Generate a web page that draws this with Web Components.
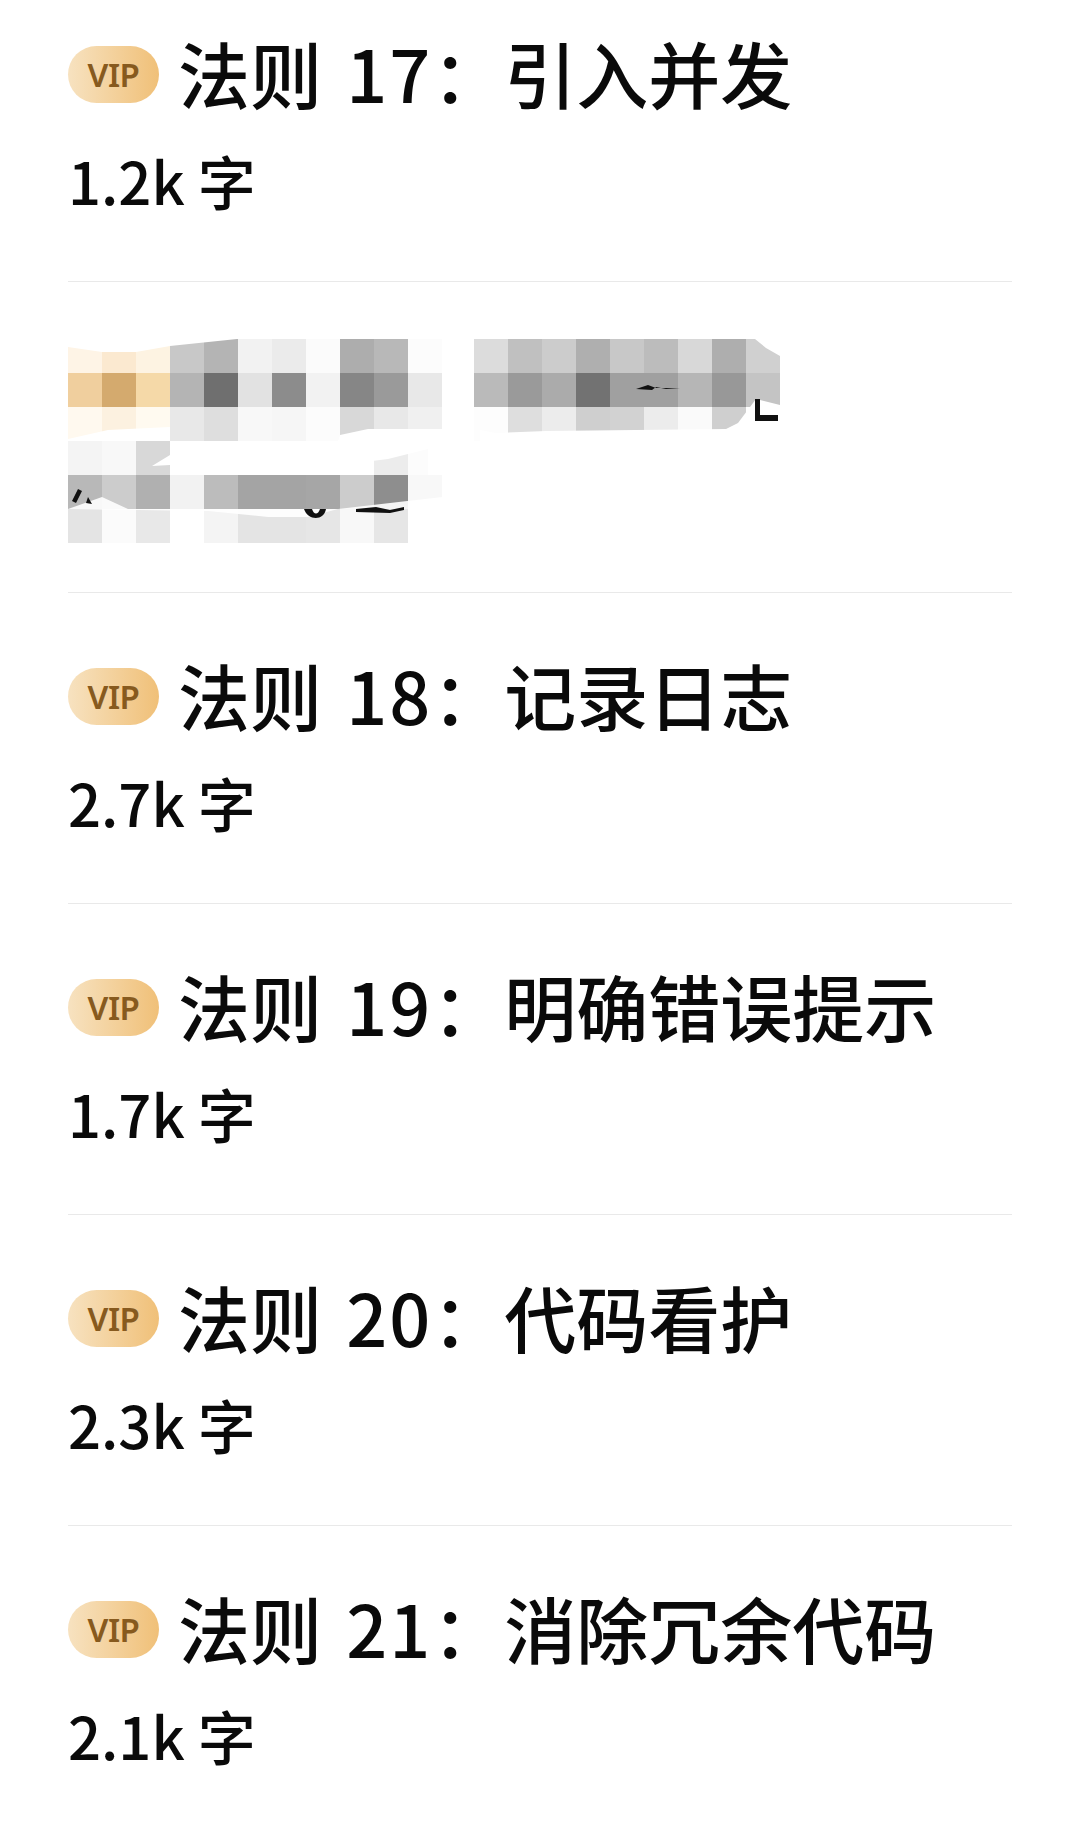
<!DOCTYPE html>
<html lang="zh"><head><meta charset="utf-8"><style>
html,body{margin:0;background:#fff}
body{font-family:"Noto Sans CJK SC","Noto Sans",sans-serif;color:#0a0a0a}
</style></head><body>
<rule-list>
<rule-item first title-text="法则 17：引入并发" count="1.2k 字"></rule-item>
<rule-item><mosaic-block></mosaic-block></rule-item>
<rule-item title-text="法则 18：记录日志" count="2.7k 字"></rule-item>
<rule-item title-text="法则 19：明确错误提示" count="1.7k 字"></rule-item>
<rule-item title-text="法则 20：代码看护" count="2.3k 字"></rule-item>
<rule-item last title-text="法则 21：消除冗余代码" count="2.1k 字"></rule-item>
</rule-list>
<script>
customElements.define('rule-list',class extends HTMLElement{constructor(){super();this.attachShadow({mode:'open'}).innerHTML=`<style>:host{display:flex;flex-direction:column;width:1080px;height:1835px;overflow:hidden;box-sizing:border-box;padding:0 68px}</style><slot></slot>`}});
customElements.define('vip-badge',class extends HTMLElement{constructor(){super();this.attachShadow({mode:'open'}).innerHTML=`<style>:host{display:flex;align-items:center;justify-content:center;flex:none;width:91px;height:57px;margin-top:5px;border-radius:28.5px;background:linear-gradient(90deg,#f7e2c0,#f0c078);color:#875a1e;font:600 33px/1 "Noto Sans",sans-serif;letter-spacing:-.5px}</style>VIP`}});
customElements.define('rule-item',class extends HTMLElement{constructor(){super();const r=this.attachShadow({mode:'open'});
const first=this.hasAttribute('first'),last=this.hasAttribute('last');
const t=this.getAttribute('title-text');
r.innerHTML=`<style>:host{display:block;box-sizing:border-box;flex:none;height:${first?282:311}px;padding-top:${first?29:58}px;${last?'':'border-bottom:1px solid #e9e9e9;'}}
.head{display:flex;align-items:center;gap:19px;height:86px}
.title{font-size:72px;font-weight:500;line-height:86px;white-space:nowrap;word-spacing:8px}
.title b{font-weight:inherit;letter-spacing:2px}
.count{font-size:58px;font-weight:500;line-height:70px;margin-top:30px;white-space:nowrap}
.holder{margin-top:-25px}
</style>${t?`<div class="head"><vip-badge></vip-badge><span class="title">${t.replace(/\d+/,'<b>$&</b>')}</span></div><div class="count">${this.getAttribute('count')}</div>`:'<div class="holder"><slot></slot></div>'}`}});
customElements.define('mosaic-block',class extends HTMLElement{constructor(){super();
const rows=[
'fef4e6 fbe9d0 fdf3e2 c8c8c8 b4b4b4 f2f2f2 ebebeb fbfbfb adadad b8b8b8 fcfcfc fff dcdcdc c0c0c0 ccc afafaf c8c8c8 bcbcbc d8d8d8 aeaeae d0d0d0',
'f0cf9e d4aa6e f5d9a8 b4b4b4 6f6f6f e2e2e2 8c8c8c f2f2f2 868686 9a9a9a e8e8e8 fff bababa 9a9a9a ababab 727272 a0a0a0 a0a0a0 b6b6b6 989898 c4c4c4',
'fff9ef fcf1e0 fffaf0 e8e8e8 dedede f8f8f8 f6f6f6 fcfcfc d8d8d8 e8e8e8 f0f0f0 fff fdfdfd dedede ececec cfcfcf d2d2d2 ececec fafafa cfcfcf fff',
'f4f4f4 f8f8f8 d8d8d8 fff fff fff fff fff fff ececec fcfcfc fff fff fff fff fff fff fff fff fff fff',
'b8b8b8 ccc b0b0b0 f2f2f2 bcbcbc a4a4a4 a4a4a4 a6a6a6 ccc 8e8e8e f8f8f8 fff fff fff fff fff fff fff fff fff fff',
'e4e4e4 fbfbfb e8e8e8 fff f4f4f4 e4e4e4 e4e4e4 e6e6e6 f8f8f8 e6e6e6 fff fff fff fff fff fff fff fff fff fff fff'];
const cells=rows.flatMap(r=>r.split(' ')).map(c=>`<i style="background:#${c}"></i>`).join('');
this.attachShadow({mode:'open'}).innerHTML=`<style>:host{display:block;position:relative;width:712px;height:204px;margin-top:24px}
.g{display:grid;grid-template-columns:repeat(11,34px) 32px repeat(9,34px);grid-auto-rows:34px}
svg{position:absolute;left:0;top:0}</style><div class="g">${cells}</div>
<svg width="712" height="204" viewBox="0 0 712 204">
<path fill="#fff" d="M0 0H169L102 7 68 13H34L0 8ZM687 0H712V17L698 9ZM270 102 L272 96 300 90H374V102ZM412 102V91L428 94 478 92 658 90 670 84 688 60 712 66V102ZM0 100 40 91 102 88V102H0ZM102 102H270L240 108 180 118 102 126 84 127 102 116ZM270 102H374V136H360V110L320 120 240 130 102 136V127Z"/>
<path fill="#fff" d="M0 170 34 158 60 170 270 170 374 158V170H270L240 178 200 178 140 172 0 170Z" opacity=".9"/>
<path fill="#111" d="M568 50 580 46 588 49 612 49 598 50 588 48 584 51ZM687 60H692V76H710V82H687ZM10 150 14 152 8 164 4 162ZM20 158 24 165 18 164ZM288 170 308 168 322 171 336 168 336 171 322 174 288 173ZM236 170H244C246 176 250 176 252 170H258C256 182 240 182 236 170Z"/>
</svg>`}});
</script>
</body></html>
